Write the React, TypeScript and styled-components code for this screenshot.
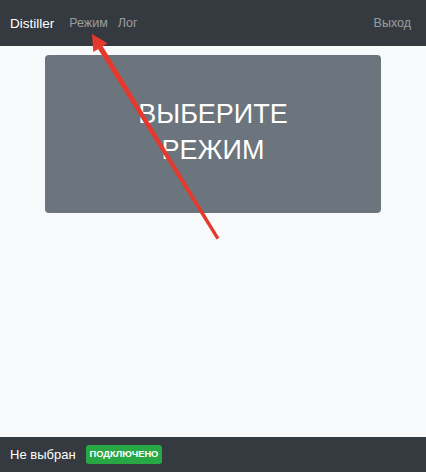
import React from "react";
import styled, { createGlobalStyle } from "styled-components";

const Global = createGlobalStyle`
  html, body { margin: 0; padding: 0; }
  body {
    background: #f8f9fa;
    font-family: "Liberation Sans", Arial, sans-serif;
  }
`;

const Page = styled.div`
  position: relative;
  display: flex;
  flex-direction: column;
  min-height: 472px;
  width: 426px;
  background: #f8f9fa;
`;

const Navbar = styled.nav`
  height: 46px;
  background: #343a40;
  display: flex;
  align-items: center;
  padding: 0 15px 0 10px;
  box-sizing: border-box;
`;

const Brand = styled.span`
  color: #ffffff;
  font-size: 13.5px;
  margin-right: 15px;
`;

const NavLink = styled.a<{ $right?: boolean }>`
  color: rgba(255, 255, 255, 0.5);
  font-size: 12.5px;
  text-decoration: none;
  margin-right: ${(p) => (p.$right ? "0" : "10px")};
  margin-left: ${(p) => (p.$right ? "auto" : "0")};
`;

const Main = styled.main`
  flex: 1;
  display: flex;
  justify-content: center;
  align-items: flex-start;
  padding-top: 9px;
`;

const Card = styled.div`
  width: 336px;
  height: 158px;
  background: #6c757d;
  border-radius: 4px;
  display: flex;
  align-items: center;
  justify-content: center;
  text-align: center;
  color: #ffffff;
  font-size: 27px;
  line-height: 36px;
  padding-bottom: 4px;
  box-sizing: border-box;
`;

const Footer = styled.footer`
  height: 35px;
  background: #343a40;
  display: flex;
  align-items: center;
  padding: 0 10px;
  gap: 10px;
`;

const Status = styled.span`
  color: #ffffff;
  font-size: 13px;
`;

const Badge = styled.span`
  background: #28a745;
  color: #ffffff;
  font-size: 9.3px;
  font-weight: bold;
  border-radius: 3px;
  padding: 4px 4px;
  line-height: 11px;
`;

const Overlay = styled.svg`
  position: absolute;
  left: 0;
  top: 0;
  pointer-events: none;
`;

export default function App() {
  return (
    <Page>
      <Global />
      <Navbar>
        <Brand>Distiller</Brand>
        <NavLink>Режим</NavLink>
        <NavLink>Лог</NavLink>
        <NavLink $right>Выход</NavLink>
      </Navbar>
      <Main>
        <Card>
          ВЫБЕРИТЕ
          <br />
          РЕЖИМ
        </Card>
      </Main>
      <Footer>
        <Status>Не выбран</Status>
        <Badge>ПОДКЛЮЧЕНО</Badge>
      </Footer>
      <Overlay width="426" height="472" viewBox="0 0 426 472">
        <polygon
          points="216.5,239.5 219.3,237.8 102.5,46 97.9,48.8"
          fill="#e5392d"
        />
        <polygon points="92,34 107.5,43.3 93.3,52" fill="#e5392d" />
      </Overlay>
    </Page>
  );
}
